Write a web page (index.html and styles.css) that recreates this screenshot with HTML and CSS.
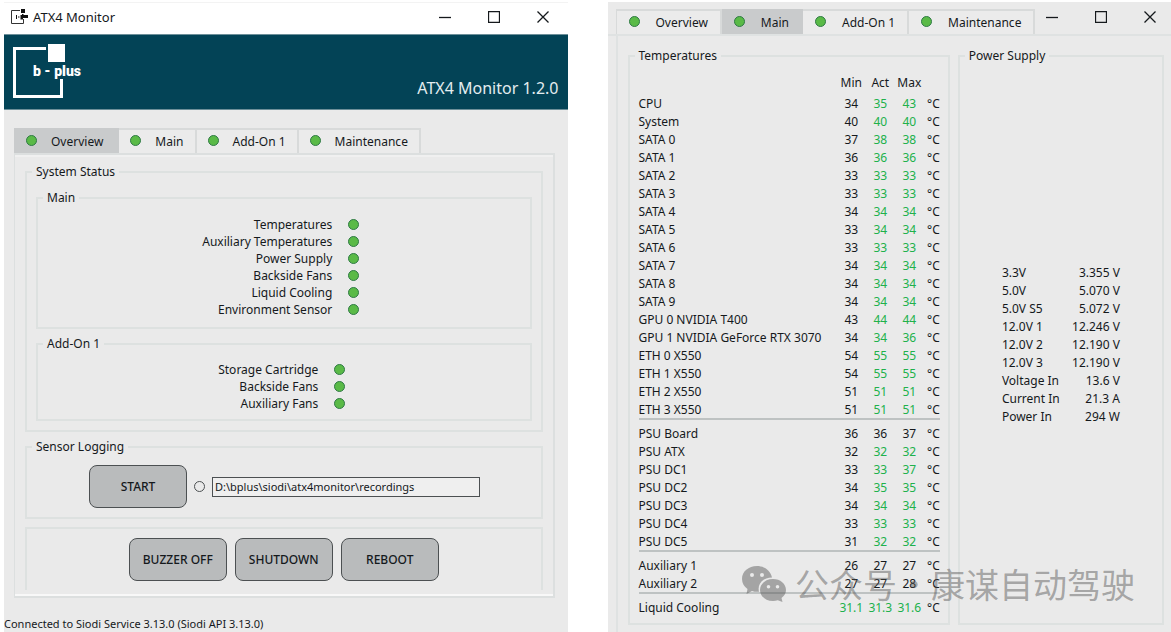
FILE: index.html
```html
<!DOCTYPE html>
<html lang="en">
<head>
<meta charset="utf-8">
<title>ATX4 Monitor</title>
<link rel="stylesheet" href="styles.css">
</head>
<body>
<main class="desktop">
  <section class="window" aria-label="ATX4 Monitor overview">
    <header class="titlebar">
      <svg class="app-icon" width="18" height="16" viewBox="0 0 18 16" aria-hidden="true">
        <path d="M9 1.500H.5v13h12V10" fill="none" stroke="#333" stroke-width="1"/>
        <path d="M10 0h4v4h-4zM5 6h1v4H5zM7 7.500h1.500v1H7zM9.500 6h1.500V5h1.500v1H17v3h-5v1.500H9.500z" fill="#111"/>
      </svg>
      <h1 class="title">ATX4 Monitor</h1>
      <div class="controls">
        <button class="control" aria-label="Minimize"><svg width="12" height="12"><path d="M0 6.500h12"/></svg></button>
        <button class="control" aria-label="Maximize"><svg width="12" height="12"><path d="M.5.5h11v11H.5z"/></svg></button>
        <button class="control" aria-label="Close"><svg width="12" height="12"><path d="M.5.5l11 11M11.500.5l-11 11"/></svg></button>
      </div>
    </header>
    <div class="banner">
      <svg class="logo" width="70" height="56" viewBox="0 0 70 56" role="img" aria-label="b-plus">
        <path d="M33 4.500H1.500v48h47V35" fill="none" stroke="#fff" stroke-width="3"/>
        <path d="M35 0h17v18H35z" fill="#fff"/>
        <text x="20" y="32" class="logo-text">b - plus</text>
      </svg>
      <p class="version">ATX4 Monitor 1.2.0</p>
    </div>
    <div class="content">
      <div class="tabs" role="tablist">
        <button class="tab active" role="tab" aria-selected="true"><span class="dot"></span>Overview</button>
        <button class="tab" role="tab"><span class="dot"></span>Main</button>
        <button class="tab" role="tab"><span class="dot"></span>Add-On 1</button>
        <button class="tab" role="tab"><span class="dot"></span>Maintenance</button>
      </div>
      <div class="panel" role="tabpanel">
        <fieldset class="group">
          <legend>System Status</legend>
          <fieldset class="group status-main">
            <legend>Main</legend>
            <ul class="status">
              <li>Temperatures<span class="dot"></span></li>
              <li>Auxiliary Temperatures<span class="dot"></span></li>
              <li>Power Supply<span class="dot"></span></li>
              <li>Backside Fans<span class="dot"></span></li>
              <li>Liquid Cooling<span class="dot"></span></li>
              <li>Environment Sensor<span class="dot"></span></li>
            </ul>
          </fieldset>
          <fieldset class="group status-addon">
            <legend>Add-On 1</legend>
            <ul class="status">
              <li>Storage Cartridge<span class="dot"></span></li>
              <li>Backside Fans<span class="dot"></span></li>
              <li>Auxiliary Fans<span class="dot"></span></li>
            </ul>
          </fieldset>
        </fieldset>
        <fieldset class="group">
          <legend>Sensor Logging</legend>
          <div class="logging">
            <button class="action">START</button>
            <input class="radio" type="radio" aria-label="Logging active">
            <input class="path" type="text" value="D:\bplus\siodi\atx4monitor\recordings" aria-label="Recording folder">
          </div>
        </fieldset>
        <div class="actions">
          <button class="action">BUZZER OFF</button>
          <button class="action">SHUTDOWN</button>
          <button class="action">REBOOT</button>
        </div>
      </div>
    </div>
    <footer class="statusbar">Connected to Siodi Service 3.13.0 (Siodi API 3.13.0)</footer>
  </section>

  <section class="window details" aria-label="ATX4 Monitor main">
    <div class="topbar">
      <div class="tabs wide" role="tablist">
        <button class="tab" role="tab"><span class="dot"></span>Overview</button>
        <button class="tab active" role="tab" aria-selected="true"><span class="dot"></span>Main</button>
        <button class="tab" role="tab"><span class="dot"></span>Add-On 1</button>
        <button class="tab" role="tab"><span class="dot"></span>Maintenance</button>
      </div>
      <div class="controls">
        <button class="control" aria-label="Minimize"><svg width="12" height="12"><path d="M0 6.500h12"/></svg></button>
        <button class="control" aria-label="Maximize"><svg width="12" height="12"><path d="M.5.5h11v11H.5z"/></svg></button>
        <button class="control" aria-label="Close"><svg width="12" height="12"><path d="M.5.5l11 11M11.500.5l-11 11"/></svg></button>
      </div>
    </div>
    <div class="readings" role="tabpanel">
      <fieldset class="group temperatures">
        <legend>Temperatures</legend>
        <table class="temps">
          <thead><tr><th class="name"></th><th>Min</th><th>Act</th><th>Max</th><th class="unit"></th></tr></thead>
          <tbody class="ok">
            <tr><td>CPU</td><td>34</td><td>35</td><td>43</td><td>°C</td></tr>
            <tr><td>System</td><td>40</td><td>40</td><td>40</td><td>°C</td></tr>
            <tr><td>SATA 0</td><td>37</td><td>38</td><td>38</td><td>°C</td></tr>
            <tr><td>SATA 1</td><td>36</td><td>36</td><td>36</td><td>°C</td></tr>
            <tr><td>SATA 2</td><td>33</td><td>33</td><td>33</td><td>°C</td></tr>
            <tr><td>SATA 3</td><td>33</td><td>33</td><td>33</td><td>°C</td></tr>
            <tr><td>SATA 4</td><td>34</td><td>34</td><td>34</td><td>°C</td></tr>
            <tr><td>SATA 5</td><td>33</td><td>34</td><td>34</td><td>°C</td></tr>
            <tr><td>SATA 6</td><td>33</td><td>33</td><td>33</td><td>°C</td></tr>
            <tr><td>SATA 7</td><td>34</td><td>34</td><td>34</td><td>°C</td></tr>
            <tr><td>SATA 8</td><td>34</td><td>34</td><td>34</td><td>°C</td></tr>
            <tr><td>SATA 9</td><td>34</td><td>34</td><td>34</td><td>°C</td></tr>
            <tr><td>GPU 0 NVIDIA T400</td><td>43</td><td>44</td><td>44</td><td>°C</td></tr>
            <tr><td>GPU 1 NVIDIA GeForce RTX 3070</td><td>34</td><td>34</td><td>36</td><td>°C</td></tr>
            <tr><td>ETH 0 X550</td><td>54</td><td>55</td><td>55</td><td>°C</td></tr>
            <tr><td>ETH 1 X550</td><td>54</td><td>55</td><td>55</td><td>°C</td></tr>
            <tr><td>ETH 2 X550</td><td>51</td><td>51</td><td>51</td><td>°C</td></tr>
            <tr><td>ETH 3 X550</td><td>51</td><td>51</td><td>51</td><td>°C</td></tr>
          </tbody>
          <tbody class="ok">
            <tr class="plain"><td>PSU Board</td><td>36</td><td>36</td><td>37</td><td>°C</td></tr>
            <tr><td>PSU ATX</td><td>32</td><td>32</td><td>32</td><td>°C</td></tr>
            <tr><td>PSU DC1</td><td>33</td><td>33</td><td>37</td><td>°C</td></tr>
            <tr><td>PSU DC2</td><td>34</td><td>35</td><td>35</td><td>°C</td></tr>
            <tr><td>PSU DC3</td><td>34</td><td>34</td><td>34</td><td>°C</td></tr>
            <tr><td>PSU DC4</td><td>33</td><td>33</td><td>33</td><td>°C</td></tr>
            <tr><td>PSU DC5</td><td>31</td><td>32</td><td>32</td><td>°C</td></tr>
          </tbody>
          <tbody>
            <tr><td>Auxiliary 1</td><td>26</td><td>27</td><td>27</td><td>°C</td></tr>
            <tr><td>Auxiliary 2</td><td>27</td><td>27</td><td>28</td><td>°C</td></tr>
          </tbody>
          <tbody class="ok all">
            <tr><td>Liquid Cooling</td><td>31.1</td><td>31.3</td><td>31.6</td><td>°C</td></tr>
          </tbody>
        </table>
      </fieldset>
      <fieldset class="group power">
        <legend>Power Supply</legend>
        <div class="power-body">
          <table class="volts">
            <tbody>
              <tr><td>3.3V</td><td>3.355 V</td></tr>
              <tr><td>5.0V</td><td>5.070 V</td></tr>
              <tr><td>5.0V S5</td><td>5.072 V</td></tr>
              <tr><td>12.0V 1</td><td>12.246 V</td></tr>
              <tr><td>12.0V 2</td><td>12.190 V</td></tr>
              <tr><td>12.0V 3</td><td>12.190 V</td></tr>
              <tr><td>Voltage In</td><td>13.6 V</td></tr>
              <tr><td>Current In</td><td>21.3 A</td></tr>
              <tr><td>Power In</td><td>294 W</td></tr>
            </tbody>
          </table>
        </div>
      </fieldset>
    </div>
    <div class="watermark" lang="zh-CN">
      <svg width="46" height="38" viewBox="0 0 46 38" aria-hidden="true">
        <path fill-rule="evenodd" d="M16 1C7.500 1 1 6.500 1 14c0 4.200 2.200 7.700 5.500 10L5.500 29l5.500-3c2 .7 4.500 1 7 .8C16 19 22 12.500 31 12.500 29.500 5.500 23.500 1 16 1zM11 8a2 2 0 1 1 0 4 2 2 0 0 1 0-4zM21 8a2 2 0 1 1 0 4 2 2 0 0 1 0-4z"/>
        <path fill-rule="evenodd" d="M32 14c-7.300 0-13 4.800-13 11s5.700 11 13 11c1.700 0 3.300-.3 4.800-.8L41.500 37l-1-4C43.300 31 45 28.200 45 25c0-6.200-5.700-11-13-11zM27.500 20a1.800 1.800 0 1 1 0 3.600 1.800 1.800 0 0 1 0-3.600zM36.500 20a1.800 1.800 0 1 1 0 3.600 1.800 1.800 0 0 1 0-3.600z"/>
      </svg>
      <span>公众号</span><span class="middot">·</span><span>康谋自动驾驶</span>
    </div>
  </section>
</main>
</body>
</html>
```
FILE: styles.css
```css
* { box-sizing: border-box; }

body {
  margin: 0;
  background: #fff;
  color: #15191c;
  font: 12px/16px "Noto Sans", "Open Sans", sans-serif;
}

h1, p, ul { margin: 0; padding: 0; }

button, input { font: inherit; color: inherit; margin: 0; }

.desktop {
  display: grid;
  grid-template-columns: 1fr 1fr;
  gap: 40px;
  min-height: 100vh;
  padding: 2px 0 0 4px;
}

.window {
  position: relative;
  display: flex;
  flex-direction: column;
  min-width: 0;
  background: #eaeaea;
}

/* Title bar */
.titlebar {
  display: flex;
  align-items: center;
  height: 32px;
  padding: 0 0 4px 7px;
  background: #fff;
  border-top: 1px solid #f3f3f3;
}

.title {
  flex: 1;
  margin-left: 4px;
  font-size: 13px;
  font-weight: 400;
}

.controls { display: flex; }

.control {
  display: grid;
  place-items: center;
  width: 49px;
  height: 28px;
  padding: 0;
  background: none;
  border: 0;
}

.control path { fill: none; stroke: #15191c; stroke-width: 1.300; }

/* Banner */
.banner {
  display: flex;
  justify-content: space-between;
  align-items: flex-end;
  height: 76px;
  padding: 9px 9px;
  background: #034356;
  border: solid #6d8f99;
  border-width: 1px 0;
}

.logo { align-self: flex-start; }

.logo-text {
  fill: #fff;
  font: 900 14px Roboto, sans-serif;
}

.version { color: #e4edf0; font-size: 16px; line-height: 24px; }

/* Tabs */
.content { padding: 18px 13px 0 10px; }

.tabs { display: flex; }

.tab {
  display: flex;
  align-items: center;
  gap: 14px;
  height: 25px;
  padding: 0 11px;
  background: #ebebeb;
  border: 2px solid #d8dada;
  border-width: 2px 2px 0 0;
  white-space: nowrap;
}

.tab:first-child { border-left-width: 1px; }

.tab.active { background: #c9cbcc; border-color: #c9cbcc; padding-right: 14px; }

.dot {
  flex: none;
  width: 11px;
  height: 11px;
  background: #5aba47;
  border: 1px solid #2f7a45;
  border-radius: 50%;
}

.tab .dot { margin-bottom: 2px; }

.panel {
  padding: 9px 10px 6px;
  border: 2px solid #dcdfdf;
  border-left-width: 1px;
  box-shadow: inset 0 -2px #f8f8f8, inset 0 2px #f0f0f0;
}

/* Group boxes */
.group {
  min-width: 0;
  margin: 0;
  padding: 0 9px 9px;
  border: 2px solid #dde1e0;
}

.group legend { margin-left: -4px; padding: 0 4px; }

.panel > .group + .group { margin-top: 7px; }

.status-main { margin-top: 10px; }

.status-main .status { padding: 10px 6px 0 0; }

.status-addon { margin-top: 7px; padding-bottom: 0; }

.status-addon .status { padding: 9px 4px 7px 0; }

.status {
  display: flex;
  flex-direction: column;
  align-items: flex-end;
  width: fit-content;
  margin: 0 auto;
  list-style: none;
  line-height: 17px;
}

.status li { display: flex; align-items: center; gap: 16px; }

/* Logging and actions */
.logging {
  display: flex;
  align-items: center;
  padding: 10px 52px 0 53px;
}

.action {
  flex: none;
  width: 98px;
  height: 43px;
  padding: 0;
  background: #b9bbbc;
  border: 1px solid #4c5052;
  border-radius: 8px;
  font-weight: 500;
}

.radio {
  appearance: none;
  flex: none;
  width: 11px;
  height: 11px;
  margin: 0 7px;
  border: 1px solid #4c5052;
  border-radius: 50%;
}

.path {
  flex: 1;
  min-width: 0;
  height: 20px;
  padding: 0 2px;
  background: #efefef;
  border: 1px solid #4c5052;
  border-radius: 0;
  font-size: 11px;
}

.actions {
  display: flex;
  justify-content: center;
  gap: 8px;
  margin-top: 8px;
  padding: 9px 0;
  border: 2px solid #dde1e0;
  border-bottom: 0;
}

.statusbar { margin-top: auto; font-size: 11px; }

/* Readings window */
.topbar {
  display: flex;
  justify-content: space-between;
  align-items: flex-start;
  padding: 7px 0 0 8px;
  border-bottom: 2px solid #dfe2e2;
}

.topbar .controls { gap: 37px; height: 25px; margin: -7px 15px 0 0; padding-top: 1px; }

.topbar .control { width: 12px; }

.wide .tab { gap: 16px; padding: 0 12px; }

.readings {
  flex: 1;
  display: grid;
  grid-template-columns: 322fr 206fr;
  gap: 8px;
  margin-left: 8px;
  padding: 12px 7px 7px 10px;
  border-left: 2px solid #dfe2e2;
}

table { border-collapse: collapse; }

td, th { height: 18px; padding: 0; font-weight: 400; }

.temps { width: 100%; margin-top: 11px; }

.temps th { width: 29px; height: 20px; text-align: center; vertical-align: top; }

.temps th.name { width: auto; }

.temps th.unit { width: 16px; }

.temps td { text-align: center; }

.temps td:first-child { text-align: left; white-space: nowrap; }

.temps td:last-child { text-align: right; }

.temps tbody + tbody tr:first-child td { height: 24px; padding-top: 4px; border-top: 2px solid #bec2c2; }

.ok td:nth-child(3), .ok td:nth-child(4), .all td:nth-child(2) { color: #20b14b; }

.ok .plain td { color: inherit; }

.temperatures { padding-right: 8px; padding-bottom: 0; }

.power-body { display: grid; place-items: center; height: 100%; padding-top: 12px; }

.volts { width: 118px; }

.volts td { white-space: nowrap; }

.volts td:last-child { text-align: right; }

/* Watermark laid over the readings */
.watermark {
  position: absolute;
  right: 36px;
  bottom: 28px;
  display: flex;
  align-items: center;
  color: rgba(80, 80, 80, 0.45);
  font: 34px/40px "Noto Sans CJK SC", sans-serif;
  pointer-events: none;
  white-space: nowrap;
}

.watermark svg { margin-right: 8px; fill: currentColor; }

.middot { width: 34px; text-align: center; }
```
